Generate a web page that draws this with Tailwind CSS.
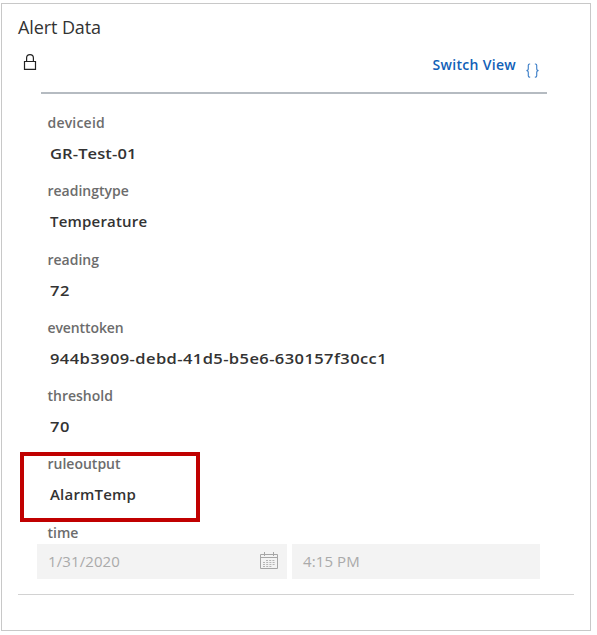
<!DOCTYPE html>
<html lang="en">
<head>
<meta charset="utf-8">
<title>Alert Data</title>
<script src="https://cdn.jsdelivr.net/npm/@tailwindcss/browser@4"></script>
</head>
<body class="bg-white font-['Open_Sans','Noto_Sans',sans-serif] text-[#333]">
<main class="ml-px mt-[3px] flex h-[628px] w-[590px] flex-col border border-[#c8c8c8] bg-white">
  <h1 class="ml-4 mt-[11px] h-6 w-fit whitespace-nowrap text-[18px] leading-6 tracking-[-0.1px]">Alert Data</h1>
  <div class="ml-5 mt-[11px] flex h-[42px] w-[525px] items-start justify-between">
    <svg class="ml-px mt-1 h-4 w-[14px]" viewBox="0 0 14 16" fill="none" stroke="#222" stroke-width="1.2"><path d="M1.5 7.5h11v7.8h-11zM3.6 7.5V4a3.4 3.4 0 0 1 6.8 0v3.5"/></svg>
    <div class="mr-[7px] flex items-start text-[#1160b7]">
      <a class="mt-[5px] whitespace-nowrap text-[14px] font-semibold leading-5 tracking-[0.3px]">Switch View</a>
      <svg class="ml-[9px] mt-[13px] h-[15px] w-[15px]" viewBox="0 0 15 16" fill="none" stroke="#3d7fc8" stroke-width="1.2"><path d="M5 1H4.4Q3 1 3 2.5v3.3Q3 8 1 8q2 0 2 2.2v3.3q0 1.5 1.4 1.5H5M10 1h.6q1.4 0 1.4 1.5v3.3Q12 8 14 8q-2 0-2 2.2v3.3q0 1.5-1.4 1.5H10"/></svg>
    </div>
  </div>
  <div class="ml-[39px] h-[2px] w-[506px] shrink-0 bg-[#b5bbc1]"></div>
  <dl class="ml-[46px] mt-[19px] text-[14px] font-semibold leading-5 text-[#6c6c6c]">
    <div class="h-[68.3px]"><dt class="-ml-[0.5px] tracking-[0.2px]">deviceid</dt><dd class="ml-0.5 mt-[10px] w-fit origin-left scale-x-110 text-[15px] tracking-[0.1px] text-[#333]">GR-Test-01</dd></div>
    <div class="h-[68.3px]"><dt class="-ml-[0.5px]">readingtype</dt><dd class="ml-0.5 mt-[10px] w-fit text-[15px] tracking-[0.2px] text-[#333]">Temperature</dd></div>
    <div class="h-[68.3px]"><dt class="-ml-[0.5px]">reading</dt><dd class="ml-0.5 mt-[10px] w-fit origin-left scale-x-110 text-[15px] tracking-[0.5px] text-[#333]">72</dd></div>
    <div class="h-[68.3px]"><dt class="-ml-[0.5px] tracking-[-0.1px]">eventtoken</dt><dd class="ml-0.5 mt-[10px] w-fit origin-left scale-x-110 whitespace-nowrap text-[15px] tracking-[0.37px] text-[#333]">944b3909-debd-41d5-b5e6-630157f30cc1</dd></div>
    <div class="h-[68.3px]"><dt class="-ml-[0.5px]">threshold</dt><dd class="ml-0.5 mt-[10px] w-fit origin-left scale-x-110 text-[15px] tracking-[0.5px] text-[#333]">70</dd></div>
    <div class="relative h-[68.3px]"><dt class="-ml-[0.5px]">ruleoutput</dt><dd class="ml-0.5 mt-[10px] w-fit text-[15px] tracking-[0.2px] text-[#333]">AlarmTemp</dd>
      <div class="absolute -left-[28px] -top-[2px] h-[70px] w-[180px] border-4 border-[#c00000]"></div>
    </div>
    <div class="h-[21px]"><dt class="-ml-[0.5px]">time</dt></div>
  </dl>
  <div class="ml-[35px] flex h-[35px] gap-[5px] text-[15px] text-[#aaa]">
    <div class="flex w-[250px] items-center justify-between bg-[#f3f3f3] pl-[11px] pr-[8px]"><span class="tracking-[0.1px]">1/31/2020</span>
      <svg class="h-[18px] w-[19px]" viewBox="0 0 19 18" fill="none" stroke="#a6a6a6"><path d="M.5 2.5h17v14H.5zM.5 5.5h17M4.5 0v4M13.5 0v4"/><path stroke="#b5b5b5" stroke-dasharray="2 1.2" d="M6 8.5h9.6M3 10.5h12.6M3 12.5h12.6M3 14.5h9"/></svg>
    </div>
    <div class="flex w-[248px] items-center bg-[#f3f3f3] pl-[11px]"><span class="tracking-[0.1px]">4:15 PM</span></div>
  </div>
  <div class="ml-4 mt-[15px] h-px w-[556px] bg-[#d2d2d2]"></div>
</main>
</body>
</html>
